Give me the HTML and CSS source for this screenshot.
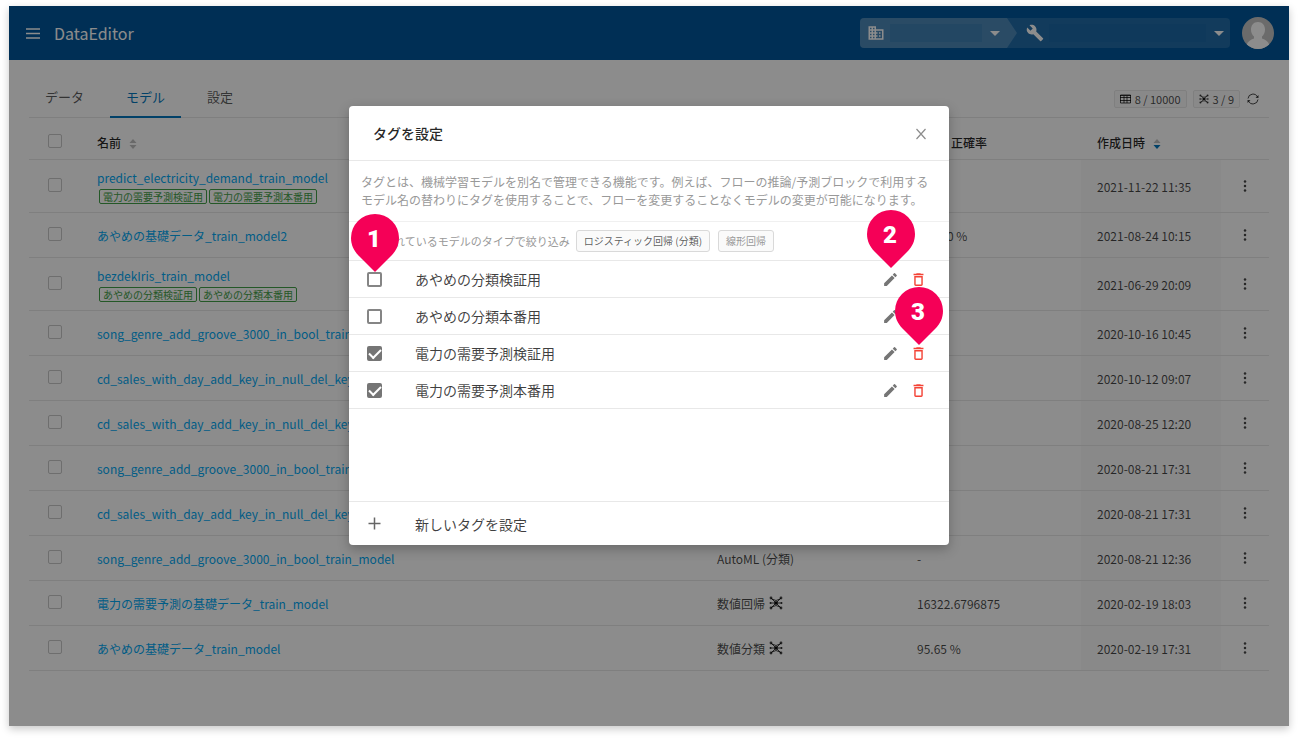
FILE: index.html
```
<!DOCTYPE html>
<html lang="ja">
<head>
<meta charset="utf-8">
<title>DataEditor</title>
<link rel="stylesheet" href="styles.css">
</head>
<body>
<svg class="defs" aria-hidden="true">
  <symbol id="edit" viewBox="0 0 24 24"><path d="M3 17.25V21h3.75L17.81 9.94l-3.75-3.75L3 17.25zM20.71 7.04a1 1 0 0 0 0-1.41l-2.34-2.34a1 1 0 0 0-1.41 0l-1.83 1.83 3.75 3.75 1.83-1.83z"/></symbol>
  <symbol id="trash" viewBox="0 0 24 24"><path d="M6 19c0 1.100.9 2 2 2h8c1.100 0 2-.9 2-2V7H6v12zM8 9h8v10H8V9zm7.500-5l-1-1h-5l-1 1H5v2h14V4z"/></symbol>
  <symbol id="dots" viewBox="0 0 12 12"><circle cx="6" cy="1.500" r="1.250"/><circle cx="6" cy="6" r="1.250"/><circle cx="6" cy="10.500" r="1.250"/></symbol>
  <symbol id="sort" viewBox="0 0 8 12"><path class="up" d="M4 1l3.500 4h-7z"/><path class="down" d="M4 11l3.500-4h-7z"/></symbol>
  <symbol id="net" viewBox="0 0 14 14"><path d="M2 2l10 10M12 2L2 12M1 7h12M3 3q4 3 8 0M3 11q4-3 8 0" fill="none" stroke="currentColor" stroke-width="1"/><circle cx="7" cy="7" r="2"/><circle cx="2" cy="2" r="1.400"/><circle cx="12" cy="2" r="1.400"/><circle cx="2" cy="12" r="1.400"/><circle cx="12" cy="12" r="1.400"/><circle cx="1.500" cy="7" r="1"/><circle cx="12.500" cy="7" r="1"/></symbol>
  <symbol id="pin" viewBox="0 0 48 58"><path d="M24 58L7.500 41.500C3 37 0 31 0 24a24 24 0 0 1 48 0c0 7-3 13-7.500 17.500z"/></symbol>
</svg>

<div class="frame">
  <header class="topbar">
    <button class="plain" aria-label="メニュー"><svg width="14" height="12" viewBox="0 0 14 12"><path d="M0 2h14M0 6.500h14M0 11h14" stroke="currentColor" stroke-width="1.500"/></svg></button>
    <h1 class="brand">DataEditor</h1>
    <div class="crumbs">
      <button class="crumb org" aria-label="組織">
        <svg width="18" height="18" viewBox="0 0 24 24"><path fill="currentColor" d="M12 7V3H2v18h20V7H12zM6 19H4v-2h2v2zm0-4H4v-2h2v2zm0-4H4V9h2v2zm0-4H4V5h2v2zm4 12H8v-2h2v2zm0-4H8v-2h2v2zm0-4H8V9h2v2zm0-4H8V5h2v2zm10 12h-8v-2h2v-2h-2v-2h2v-2h-2V9h8v10zm-2-8h-2v2h2v-2zm0 4h-2v2h2v-2z"/></svg>
        <span class="masked"></span>
        <svg width="10" height="5" viewBox="0 0 10 5"><path fill="currentColor" d="M0 0h10L5 5z"/></svg>
      </button>
      <button class="crumb project" aria-label="プロジェクト">
        <svg width="18" height="18" viewBox="0 0 24 24"><path fill="currentColor" d="M22.700 19l-9.100-9.100c.9-2.300.4-5-1.500-6.900-2-2-5-2.400-7.400-1.300L9 6 6 9 1.600 4.700C.4 7.100.9 10.100 2.900 12.100c1.900 1.900 4.600 2.400 6.900 1.500l9.100 9.100c.4.4 1 .4 1.400 0l2.300-2.300c.5-.4.5-1.100.1-1.400z"/></svg>
        <span class="masked"></span>
        <svg width="10" height="5" viewBox="0 0 10 5"><path fill="currentColor" d="M0 0h10L5 5z"/></svg>
      </button>
    </div>
    <button class="plain" aria-label="アカウント"><svg width="32" height="32" viewBox="0 0 32 32"><clipPath id="disc"><circle cx="16" cy="16" r="16"/></clipPath><g clip-path="url(#disc)"><path fill="#c4c4c4" d="M0 0h32v32H0z"/><path fill="#fff" d="M16 5c4.500 0 7 3.500 7 7.500 0 3-1.200 5.500-3 7v2c3.500 1 6.500 3 7.500 7V34h-23v-5.500c1-4 4-6 7.500-7v-2c-1.800-1.500-3-4-3-7C9 8.500 11.500 5 16 5z"/></g></svg></button>
  </header>

  <main class="content">
    <div class="tabbar">
      <nav class="tabs">
        <a class="tab" href="#data">データ</a>
        <a class="tab active" href="#model">モデル</a>
        <a class="tab" href="#settings">設定</a>
      </nav>
      <div class="quota">
        <span class="badge"><svg width="11" height="10" viewBox="0 0 11 10"><path d="M.5 1h10v8H.5zM0 3.500h11M0 6.500h11M4 2v7M7 2v7M0 1.500h11" fill="none" stroke="currentColor"/></svg>8 / 10000</span>
        <span class="badge"><svg width="10" height="10"><use href="#net"/></svg>3 / 9</span>
        <button class="plain reload" aria-label="更新"><svg width="12" height="12" viewBox="0 0 12 12"><path d="M1 5.500a5 5 0 0 1 9.500-1.500M11 6.500a5 5 0 0 1-9.500 1.500" fill="none" stroke="currentColor"/><path fill="currentColor" d="M11.500 2v3H8.500zM.5 10V7h3z"/></svg></button>
      </div>
    </div>

    <table class="models">
      <colgroup><col class="c-check"><col><col class="c-type"><col class="c-score"><col class="c-date"><col class="c-menu"></colgroup>
      <thead>
        <tr>
          <th><input type="checkbox" class="box" aria-label="すべて選択"></th>
          <th>名前<svg class="sort" width="8" height="12"><use href="#sort"/></svg></th>
          <th></th>
          <th>誤差 / 正確率</th>
          <th>作成日時<svg class="sort desc" width="8" height="12"><use href="#sort"/></svg></th>
          <th></th>
        </tr>
      </thead>
      <tbody>
        <tr><td><input type="checkbox" class="box" aria-label="選択"></td><td><a href="#m1">predict_electricity_demand_train_model</a><div class="tags"><span class="tag">電力の需要予測検証用</span><span class="tag">電力の需要予測本番用</span></div></td><td></td><td></td><td class="date">2021-11-22 11:35</td><td><button class="plain more" aria-label="操作"><svg width="12" height="12"><use href="#dots"/></svg></button></td></tr>
        <tr><td><input type="checkbox" class="box" aria-label="選択"></td><td><a href="#m2">あやめの基礎データ_train_model2</a></td><td></td><td>100.00 %</td><td class="date">2021-08-24 10:15</td><td><button class="plain more" aria-label="操作"><svg width="12" height="12"><use href="#dots"/></svg></button></td></tr>
        <tr><td><input type="checkbox" class="box" aria-label="選択"></td><td><a href="#m3">bezdekIris_train_model</a><div class="tags"><span class="tag">あやめの分類検証用</span><span class="tag">あやめの分類本番用</span></div></td><td></td><td></td><td class="date">2021-06-29 20:09</td><td><button class="plain more" aria-label="操作"><svg width="12" height="12"><use href="#dots"/></svg></button></td></tr>
        <tr><td><input type="checkbox" class="box" aria-label="選択"></td><td><a href="#m4">song_genre_add_groove_3000_in_bool_train_model</a></td><td></td><td></td><td class="date">2020-10-16 10:45</td><td><button class="plain more" aria-label="操作"><svg width="12" height="12"><use href="#dots"/></svg></button></td></tr>
        <tr><td><input type="checkbox" class="box" aria-label="選択"></td><td><a href="#m5">cd_sales_with_day_add_key_in_null_del_key_train_model</a></td><td></td><td></td><td class="date">2020-10-12 09:07</td><td><button class="plain more" aria-label="操作"><svg width="12" height="12"><use href="#dots"/></svg></button></td></tr>
        <tr><td><input type="checkbox" class="box" aria-label="選択"></td><td><a href="#m6">cd_sales_with_day_add_key_in_null_del_key_train_model</a></td><td></td><td></td><td class="date">2020-08-25 12:20</td><td><button class="plain more" aria-label="操作"><svg width="12" height="12"><use href="#dots"/></svg></button></td></tr>
        <tr><td><input type="checkbox" class="box" aria-label="選択"></td><td><a href="#m7">song_genre_add_groove_3000_in_bool_train_model</a></td><td></td><td></td><td class="date">2020-08-21 17:31</td><td><button class="plain more" aria-label="操作"><svg width="12" height="12"><use href="#dots"/></svg></button></td></tr>
        <tr><td><input type="checkbox" class="box" aria-label="選択"></td><td><a href="#m8">cd_sales_with_day_add_key_in_null_del_key_train_model</a></td><td></td><td></td><td class="date">2020-08-21 17:31</td><td><button class="plain more" aria-label="操作"><svg width="12" height="12"><use href="#dots"/></svg></button></td></tr>
        <tr><td><input type="checkbox" class="box" aria-label="選択"></td><td><a href="#m9">song_genre_add_groove_3000_in_bool_train_model</a></td><td>AutoML (分類)</td><td>-</td><td class="date">2020-08-21 12:36</td><td><button class="plain more" aria-label="操作"><svg width="12" height="12"><use href="#dots"/></svg></button></td></tr>
        <tr><td><input type="checkbox" class="box" aria-label="選択"></td><td><a href="#m10">電力の需要予測の基礎データ_train_model</a></td><td>数値回帰<svg class="net" width="14" height="14"><use href="#net"/></svg></td><td>16322.6796875</td><td class="date">2020-02-19 18:03</td><td><button class="plain more" aria-label="操作"><svg width="12" height="12"><use href="#dots"/></svg></button></td></tr>
        <tr><td><input type="checkbox" class="box" aria-label="選択"></td><td><a href="#m11">あやめの基礎データ_train_model</a></td><td>数値分類<svg class="net" width="14" height="14"><use href="#net"/></svg></td><td>95.65 %</td><td class="date">2020-02-19 17:31</td><td><button class="plain more" aria-label="操作"><svg width="12" height="12"><use href="#dots"/></svg></button></td></tr>
      </tbody>
    </table>
  </main>

  <div class="mask">
    <section class="dialog" role="dialog" aria-labelledby="dialog-title">
      <header class="dialog-head">
        <h2 id="dialog-title" class="dialog-title">タグを設定</h2>
        <button class="plain close" aria-label="閉じる"><svg width="10" height="12" viewBox="0 0 10 12"><path d="M.5 1l9 10M9.500 1l-9 10" fill="none" stroke="currentColor" stroke-width="1.200"/></svg></button>
      </header>
      <p class="about">タグとは、機械学習モデルを別名で管理できる機能です。例えば、フローの推論/予測ブロックで利用するモデル名の替わりにタグを使用することで、フローを変更することなくモデルの変更が可能になります。</p>
      <div class="filter">
        <span>使用されているモデルのタイプで絞り込み</span>
        <button class="chip">ロジスティック回帰 (分類)</button>
        <button class="chip off">線形回帰</button>
      </div>
      <ul class="list">
        <li class="item">
          <input type="checkbox" class="check" id="t1"><label class="item-name" for="t1">あやめの分類検証用</label>
          <button class="plain icon" aria-label="編集"><svg width="17" height="17"><use href="#edit"/></svg></button>
          <button class="plain icon danger" aria-label="削除"><svg width="17" height="17"><use href="#trash"/></svg></button>
        </li>
        <li class="item">
          <input type="checkbox" class="check" id="t2"><label class="item-name" for="t2">あやめの分類本番用</label>
          <button class="plain icon" aria-label="編集"><svg width="17" height="17"><use href="#edit"/></svg></button>
          <button class="plain icon danger" aria-label="削除"><svg width="17" height="17"><use href="#trash"/></svg></button>
        </li>
        <li class="item">
          <input type="checkbox" class="check" id="t3" checked><label class="item-name" for="t3">電力の需要予測検証用</label>
          <button class="plain icon" aria-label="編集"><svg width="17" height="17"><use href="#edit"/></svg></button>
          <button class="plain icon danger" aria-label="削除"><svg width="17" height="17"><use href="#trash"/></svg></button>
        </li>
        <li class="item">
          <input type="checkbox" class="check" id="t4" checked><label class="item-name" for="t4">電力の需要予測本番用</label>
          <button class="plain icon" aria-label="編集"><svg width="17" height="17"><use href="#edit"/></svg></button>
          <button class="plain icon danger" aria-label="削除"><svg width="17" height="17"><use href="#trash"/></svg></button>
        </li>
      </ul>
      <button class="plain add"><svg width="15" height="14" viewBox="0 0 15 14"><path d="M1.500 6.500h12M7.500 .5v12" stroke="#666" stroke-width="1.500"/></svg>新しいタグを設定</button>

      <div class="pin pin-1"><svg width="48" height="58"><use href="#pin"/></svg><span>1</span></div>
      <div class="pin pin-2"><svg width="48" height="58"><use href="#pin"/></svg><span>2</span></div>
      <div class="pin pin-3"><svg width="48" height="58"><use href="#pin"/></svg><span>3</span></div>
    </section>
  </div>
</div>
</body>
</html>
```

FILE: styles.css
```
* { box-sizing: border-box; }
body {
  margin: 0;
  padding: 6px 9px 12px;
  background: #fff;
  color: rgba(0, 0, 0, .72);
  font: 12px/18px "Noto Sans CJK JP", sans-serif;
}
h1, h2, p, ul { margin: 0; padding: 0; }
a { color: #03a9f4; text-decoration: none; }
button { font: inherit; cursor: pointer; }
svg { display: block; flex: none; fill: currentColor; }
.defs { position: absolute; width: 0; height: 0; }
.plain { display: flex; align-items: center; padding: 0; border: 0; background: none; color: inherit; }

.frame {
  position: relative;
  min-height: calc(100vh - 18px);
  background: #fff;
  box-shadow: 0 3px 8px rgba(0, 0, 0, .22);
}

.topbar {
  display: flex;
  align-items: center;
  height: 54px;
  padding: 0 15px 0 17px;
  background: #01579b;
  color: #fff;
}
.brand { margin-left: 14px; font-size: 16px; line-height: 24px; font-weight: 400; }
.crumbs {
  display: flex;
  width: 370px;
  height: 30px;
  margin: 0 12px 0 auto;
  border-radius: 4px;
  overflow: hidden;
  background: rgba(255, 255, 255, .13);
}
.crumb {
  display: flex;
  align-items: center;
  gap: 5px;
  padding: 0;
  border: 0;
  background: none;
  color: #fff;
}
.org {
  width: 157px;
  padding: 0 17px 0 7px;
  background: rgba(255, 255, 255, .2);
  clip-path: polygon(0 0, calc(100% - 10px) 0, 100% 50%, calc(100% - 10px) 100%, 0 100%);
}
.project { flex: 1; padding: 0 6px 0 9px; }
.masked { flex: 1; height: 18px; margin-right: 3px; background: rgba(1, 87, 155, .15); }

.content { padding: 20px 20px 55px; }
.tabbar {
  display: flex;
  justify-content: space-between;
  height: 38px;
  border-bottom: 1px solid #e8e8e8;
}
.tabs { display: flex; gap: 10px; height: 38px; }
.tab {
  padding: 7px 16px 0;
  border-bottom: 2px solid transparent;
  color: rgba(0, 0, 0, .65);
  font-size: 13px;
  line-height: 20px;
}
.tab.active { color: #0277bd; border-color: #0277bd; }
.quota { display: flex; align-items: center; gap: 6px; padding: 1px 10px 0 0; }
.badge {
  display: flex;
  align-items: center;
  gap: 4px;
  height: 18px;
  padding: 0 5px;
  border: 1px solid #e8e8e8;
  border-radius: 2px;
  background: #fafafa;
  font-size: 11px;
}
.reload { margin-left: 1px; }

.models { width: 100%; border-collapse: collapse; table-layout: fixed; }
.c-check { width: 52px; }
.c-type { width: 200px; }
.c-score { width: 180px; }
.c-date { width: 140px; }
.c-menu { width: 48px; }
.models th, .models td {
  height: 45px;
  padding: 9px 16px 7px;
  border-bottom: 1px solid #e8e8e8;
  text-align: left;
  vertical-align: middle;
  white-space: nowrap;
}
.models th { height: 41px; padding: 10px 16px 0; color: rgba(0, 0, 0, .85); font-weight: 500; }
.models .date { background: #fafafa; }
.models th:first-child { padding: 5px 0 0 19px; }
.models td:first-child { padding: 0 0 2px 19px; }
.models td:last-child { padding: 0 18px; }
.sort { display: inline-block; margin-left: 8px; vertical-align: -2px; color: #bfbfbf; }
.sort.desc { color: #0277bd; }
.up { fill: #bfbfbf; }
.box {
  appearance: none;
  display: block;
  width: 14px;
  height: 14px;
  margin: 0;
  border: 1px solid #c8c8c8;
  border-radius: 2px;
}
.tags { display: flex; gap: 2px; padding: 2px 0 1px 2px; }
.tag {
  padding: 0 3px;
  border: 1px solid #43a047;
  border-radius: 2px;
  color: #43a047;
  font-size: 10px;
  line-height: 13px;
}
.net { display: inline-block; margin-left: 4px; vertical-align: -1px; }

.mask {
  position: absolute;
  inset: 0;
  padding: 100px 20px 0;
  background: rgba(0, 0, 0, .45);
}
.dialog {
  position: relative;
  display: flex;
  flex-direction: column;
  max-width: 600px;
  margin: 0 auto;
  border-radius: 4px;
  background: #fff;
  box-shadow: 0 4px 12px rgba(0, 0, 0, .25);
}
.dialog-head {
  display: flex;
  align-items: center;
  justify-content: space-between;
  padding: 16px 23px 16px 24px;
  border-bottom: 1px solid #e8e8e8;
}
.dialog-title { color: rgba(0, 0, 0, .85); font-size: 14px; line-height: 22px; font-weight: 500; }
.close { padding-top: 2px; color: #8c8c8c; }
.about { padding: 12px; border-bottom: 1px solid #f0f0f0; color: #999; }
.filter {
  display: flex;
  align-items: center;
  gap: 6px;
  height: 39px;
  padding: 0 12px;
  border-bottom: 1px solid #e8e8e8;
  color: #999;
  font-size: 11px;
}
.chip {
  height: 22px;
  margin-right: 2px;
  padding: 0 7px;
  border: 1px solid #d9d9d9;
  border-radius: 3px;
  background: #fafafa;
  color: rgba(0, 0, 0, .65);
  font-size: 10px;
  line-height: 18px;
}
.chip.off { color: #999; }
.list { min-height: 240px; list-style: none; }
.item {
  display: flex;
  align-items: center;
  height: 37px;
  padding: 0 22px 0 18px;
  border-bottom: 1px solid #e8e8e8;
  font-size: 14px;
}
.item-name { flex: 1; color: rgba(0, 0, 0, .75); line-height: 22px; padding-left: 33px; }
.check {
  appearance: none;
  width: 15px;
  height: 15px;
  margin: 0;
  border: 2px solid #858585;
  border-radius: 2px;
}
.check:checked {
  border-color: #757575;
  background: #757575;
  display: grid;
  place-items: center;
}
.check:checked::before {
  content: "";
  width: 10px;
  height: 5px;
  border: solid #fff;
  border-width: 0 0 2px 2px;
  transform: translateY(-1px) rotate(-45deg);
}
.icon { margin-left: 11px; color: #757575; }
.icon.danger { color: #f44336; }
.add {
  gap: 33px;
  height: 44px;
  padding: 0 18px;
  border-top: 1px solid #e8e8e8;
  color: rgba(0, 0, 0, .75);
  font-size: 14px;
}

.pin { position: absolute; display: grid; width: 48px; color: #f50057; }
.pin svg { grid-area: 1 / 1; }
.pin span {
  grid-area: 1 / 1;
  padding-right: 2px;
  color: #fff;
  font: 900 24px/50px Roboto, sans-serif;
  text-align: center;
}
.pin-1 { left: 2px; top: 108px; }
.pin-2 { left: 518px; top: 104px; }
.pin-3 { left: 546px; top: 181px; }
```
